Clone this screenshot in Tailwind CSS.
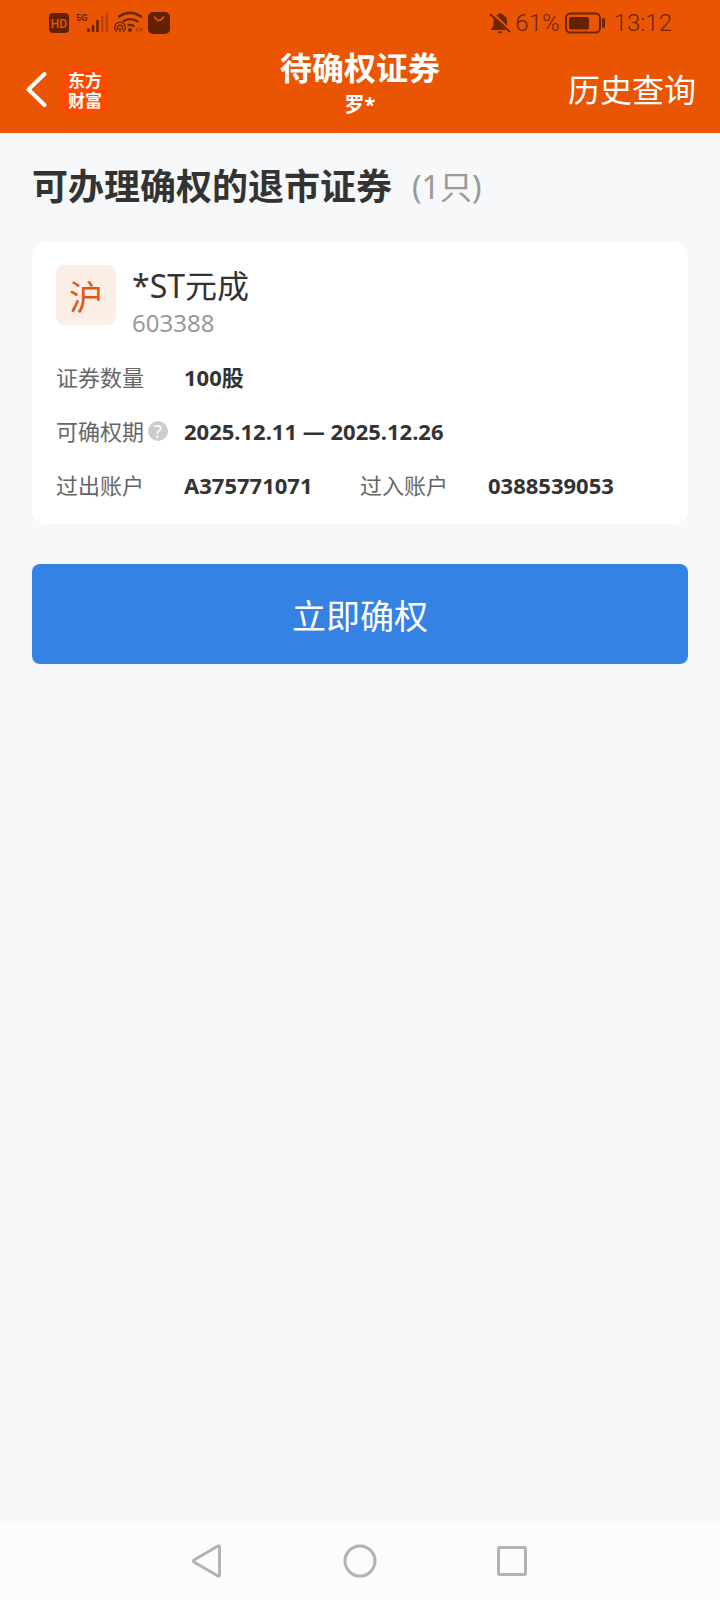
<!DOCTYPE html>
<html lang="zh-CN">
<head>
<meta charset="utf-8">
<meta name="viewport" content="width=device-width, initial-scale=1">
<title>待确权证券</title>
<script src="https://cdn.jsdelivr.net/npm/@tailwindcss/browser@4"></script>
</head>
<body class="flex min-h-screen flex-col bg-[#f7f8fa] font-['Noto_Sans','Noto_Sans_CJK_SC',sans-serif] text-[#333333]">
<header class="bg-[#ea5504] text-white">
  <!-- Status bar -->
  <div class="flex h-[46px] items-center justify-between px-12 text-[#6b2602]">
    <svg class="h-[46px] w-[126px]" viewBox="48 0 126 46" fill="none" aria-label="信号">
      <rect x="49" y="13" width="20" height="20" rx="4" fill="#642300"/>
      <text x="59" y="27.500" text-anchor="middle" font-family="Roboto" font-weight="500" font-size="12" fill="#ea5504">HD</text>
      <text x="76" y="21" font-family="Roboto" font-weight="700" font-size="9" fill="#642300">5G</text>
      <path d="M88.500 29.500v1.500M93 26v5M97.500 21v10" stroke="#642300" stroke-width="2.600" stroke-linecap="round"/>
      <path d="M102.300 16.500v14.500M106.800 13.500v17.500" stroke="#b94204" stroke-width="2.400" stroke-linecap="round"/>
      <path d="M119 16.500q11-7.500 22 0M123.500 21q7.500-4 14 .5M128.500 25q3-.5 5 1" stroke="#6b2602" stroke-width="2.400" stroke-linecap="round"/>
      <circle cx="130" cy="30" r="2" fill="#6b2602"/>
      <path d="M116.500 31.500a5.300 5.300 0 1 1 7 0M118 29.500a2.600 2.600 0 1 1 4 0M120 28.500v3.500" stroke="#6b2602" stroke-width="1.400" stroke-linecap="round"/>
      <path d="M138.500 27v5l-3.500-2.500zM140 27v5l3.500-2.500z" fill="#b94204"/>
      <rect x="148" y="12" width="22" height="22" rx="5" fill="#642300"/>
      <path d="M154.500 17q4.500 7 9 0" stroke="#ea5504" stroke-width="1.500" stroke-linecap="round"/>
    </svg>
    <div class="flex items-center gap-1 font-['Roboto'] text-[24px] leading-[46px]">
      <svg class="h-6 w-[22px]" viewBox="1 0 22 24" aria-label="静音">
        <path d="M12 2c-.9 0-1.400.6-1.400 1.300C7.500 4 5.500 6.500 5.500 9.500V15l-2.500 3v1h18v-1l-2-3V9.500c0-3-2-5.500-5.500-6.200C13.500 2.600 12.900 2 12 2zM9.500 20.500h5q-.5 2-2.500 2t-2.500-2z" fill="#6b2602"/>
        <path d="M3 2l19 18" stroke="#ea5504" stroke-width="4"/>
        <path d="M2.500 3.500l19 17" stroke="#6b2602" stroke-width="2" stroke-linecap="round"/>
      </svg>
      <span class="font-light">61%</span>
      <svg class="h-6 w-[42px]" viewBox="0 0 42 24" fill="none" aria-label="电量">
        <rect x="2" y="2.500" width="34" height="19" rx="4.500" stroke="#6b2602" stroke-width="2"/>
        <rect x="5" y="6" width="20" height="12.500" rx="2" fill="#642300"/>
        <rect x="38" y="7" width="3" height="10" rx="1.500" fill="#6b2602"/>
      </svg>
      <time class="ml-1 font-light">13:12</time>
    </div>
  </div>
  <!-- Title bar -->
  <div class="grid h-[87px] grid-cols-[1fr_auto_1fr] items-center px-6">
    <div class="flex items-center gap-3">
      <button type="button" aria-label="返回" class="h-10 w-[26px]">
        <svg class="h-10 w-[26px]" viewBox="0 0 26 40" fill="none"><path d="M20.500 4L4.500 19.500L20.500 35" stroke="#fff" stroke-width="4" stroke-linecap="round" stroke-linejoin="round"/></svg>
      </button>
      <a href="#" class="flex h-[46px] w-[46px] flex-col items-center justify-center rounded-[10px] bg-[#ff4800] font-['Noto_Sans_CJK_SC',sans-serif] text-[17px] leading-5 font-bold"><span>东方</span><span>财富</span></a>
    </div>
    <div class="flex flex-col items-center self-start">
      <h1 class="text-[32px] leading-[44px] font-bold">待确权证券</h1>
      <p class="text-[20px] leading-[30px] font-bold">罗*</p>
    </div>
    <a href="#" class="justify-self-end text-[32px] leading-[44px]">历史查询</a>
  </div>
</header>

<main class="flex-1 px-8 pt-7">
  <h2 class="flex items-center gap-5 text-[36px] leading-[52px] font-bold">可办理确权的退市证券 <span class="text-[32px] font-normal text-[#999999]">(1只)</span></h2>
  <section class="mt-7 rounded-2xl bg-white px-6 pt-6 pb-3">
    <div class="flex gap-4">
      <span class="flex size-[60px] items-center justify-center rounded-lg bg-[#fceee6] pt-1 text-[34px] leading-[56px] text-[#dd5a14]">沪</span>
      <div>
        <h3 class="text-[32px] leading-[42px]">*ST元成</h3>
        <p class="text-[24px] leading-8 text-[#999999]">603388</p>
      </div>
    </div>
    <dl class="mt-[11px] grid grid-cols-2 text-[22px] leading-[54px]">
      <div class="col-span-2 flex"><dt class="w-32 text-[#666666]">证券数量</dt><dd class="font-bold">100股</dd></div>
      <div class="col-span-2 flex">
        <dt class="flex w-32 items-center gap-1 text-[#666666]">可确权期
          <button type="button" aria-label="说明" class="flex size-5 items-center justify-center rounded-full bg-[#cccccc] text-[18px] leading-5 text-white">?</button>
        </dt>
        <dd class="font-bold">2025.12.11 — 2025.12.26</dd>
      </div>
      <div class="flex"><dt class="w-32 text-[#666666]">过出账户</dt><dd class="font-bold">A375771071</dd></div>
      <div class="flex"><dt class="w-32 text-[#666666]">过入账户</dt><dd class="font-bold">0388539053</dd></div>
    </dl>
  </section>
  <button type="button" class="mt-10 h-[100px] w-full rounded-lg bg-[#3482e3] pt-1 text-[34px] text-white">立即确权</button>
</main>

<nav aria-label="系统导航" class="flex h-[78px] items-center justify-center gap-[117px] bg-[#fcfcfc]">
  <button type="button" aria-label="返回"><svg class="size-9" viewBox="0 0 36 36" fill="none" stroke="#b3b3b3" stroke-width="3" stroke-linejoin="round"><path d="M30.500 3.500v29q-.5 1-1.500.5L5 19q-1-1 0-2L29 3q1-.5 1.500.5z"/></svg></button>
  <button type="button" aria-label="主页"><svg class="size-9" viewBox="0 0 36 36" fill="none" stroke="#b3b3b3" stroke-width="3"><circle cx="18" cy="18" r="15"/></svg></button>
  <button type="button" aria-label="最近任务"><svg class="size-9" viewBox="0 0 36 36" fill="none" stroke="#b3b3b3" stroke-width="3"><rect x="3.500" y="4.500" width="27" height="27" rx="1.500"/></svg></button>
</nav>
</body>
</html>
